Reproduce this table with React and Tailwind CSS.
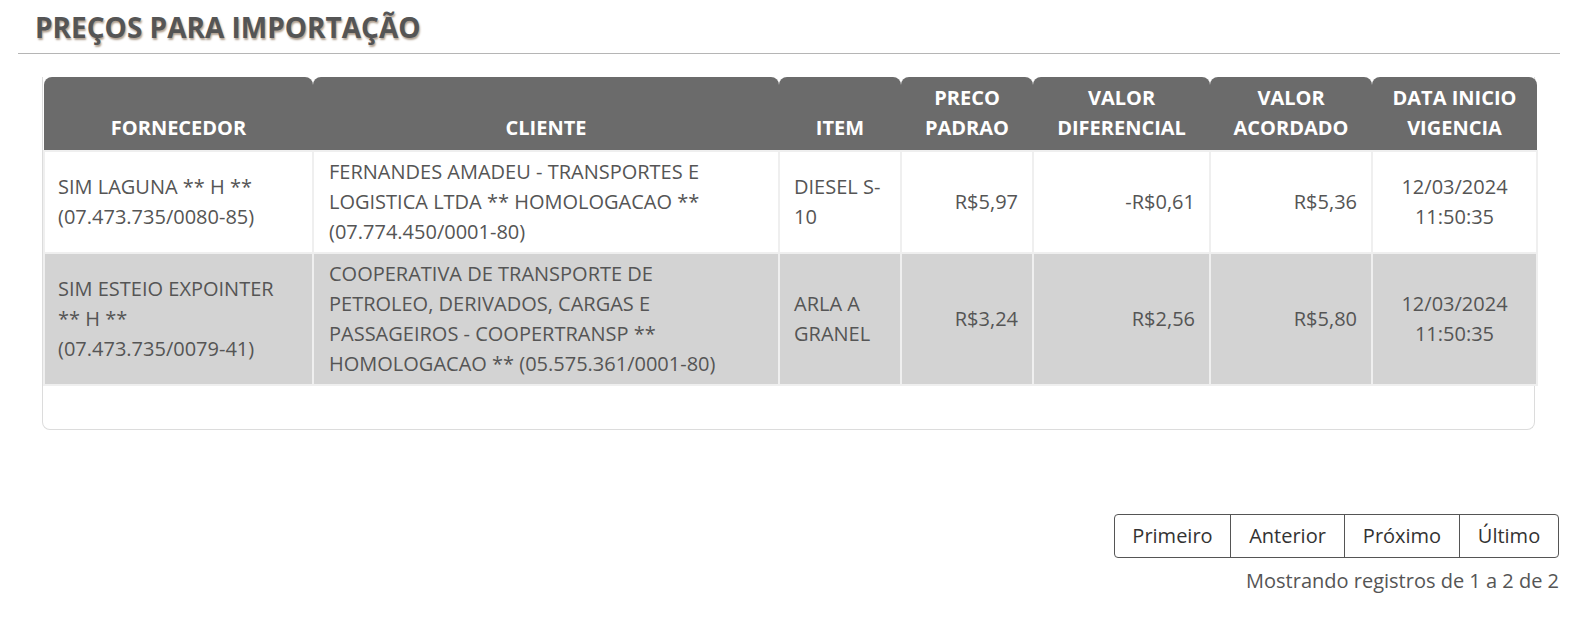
import React from 'react';

const rows = [
  {
    fornecedor: 'SIM LAGUNA ** H ** (07.473.735/0080-85)',
    cliente: 'FERNANDES AMADEU - TRANSPORTES E LOGISTICA LTDA ** HOMOLOGACAO ** (07.774.450/0001-80)',
    item: 'DIESEL S-10',
    padrao: 'R$5,97',
    diferencial: '-R$0,61',
    acordado: 'R$5,36',
    data: '12/03/2024 11:50:35',
  },
  {
    fornecedor: 'SIM ESTEIO EXPOINTER ** H ** (07.473.735/0079-41)',
    cliente: 'COOPERATIVA DE TRANSPORTE DE PETROLEO, DERIVADOS, CARGAS E PASSAGEIROS - COOPERTRANSP ** HOMOLOGACAO ** (05.575.361/0001-80)',
    item: 'ARLA A GRANEL',
    padrao: 'R$3,24',
    diferencial: 'R$2,56',
    acordado: 'R$5,80',
    data: '12/03/2024 11:50:35',
  },
];

const headers = [
  ['FORNECEDOR', 269],
  ['CLIENTE', 466],
  ['ITEM', 122],
  ['PRECO PADRAO', 132],
  ['VALOR DIFERENCIAL', 177],
  ['VALOR ACORDADO', 162],
  ['DATA INICIO VIGENCIA', 165],
];

export default function App() {
  const td = 'border-2 border-[#efefef] px-[14px] py-[5px] align-middle';
  return (
    <div className="w-[1570px] h-[620px] bg-white text-[#555] font-['Open_Sans',sans-serif] pl-[18px] pr-[10px] pt-[8px]">
      <h1 className="pl-[17px] text-[28px] leading-[38px] font-bold text-[#555] [text-shadow:1px_2px_2px_#b0a090]">
        PREÇOS PARA IMPORTAÇÃO
      </h1>
      <div className="mt-[7px] h-px bg-[#b5b5b5]" />

      <div className="ml-[24px] mr-[25px] mt-[23px] h-[353px] rounded-b-lg border border-t-0 border-[#dcdcdc]">
        <table className="w-full table-fixed border-collapse text-[20px] leading-[30px]">
          <colgroup>
            {headers.map(([h, w]) => (
              <col key={h} style={{ width: w }} />
            ))}
          </colgroup>
          <thead>
            <tr>
              {headers.map(([h]) => (
                <th
                  key={h}
                  className="bg-[#6b6b6b] text-white font-bold text-center align-bottom rounded-t-lg px-2 pt-[6px] pb-[7px] h-[73px]"
                >
                  {h}
                </th>
              ))}
            </tr>
          </thead>
          <tbody>
            {rows.map((r, i) => (
              <tr key={i} className={i % 2 === 1 ? 'bg-[#d3d3d3]' : 'bg-white'}>
                <td className={`${td} pl-[13px]`}>{r.fornecedor}</td>
                <td className={`${td} pl-[15px] pr-[50px]`}>{r.cliente}</td>
                <td className={`${td} pl-[14px]`}>{r.item}</td>
                <td className={`${td} text-right`}>{r.padrao}</td>
                <td className={`${td} text-right`}>{r.diferencial}</td>
                <td className={`${td} text-right`}>{r.acordado}</td>
                <td className={`${td} text-center`}>{r.data}</td>
              </tr>
            ))}
          </tbody>
        </table>
      </div>

      <div className="mt-[84px] flex flex-col items-end pr-[1px]">
        <div className="flex h-[44px] rounded border border-[#555] text-[20px] text-[#333]">
          <button className="w-[116px] border-r border-[#555]">Primeiro</button>
          <button className="w-[114px] border-r border-[#555]">Anterior</button>
          <button className="w-[115px] border-r border-[#555]">Próximo</button>
          <button className="w-[98px]">Último</button>
        </div>
        <div className="mt-[8px] text-[20px] leading-[30px] text-[#555]">
          Mostrando registros de 1 a 2 de 2
        </div>
      </div>
    </div>
  );
}
